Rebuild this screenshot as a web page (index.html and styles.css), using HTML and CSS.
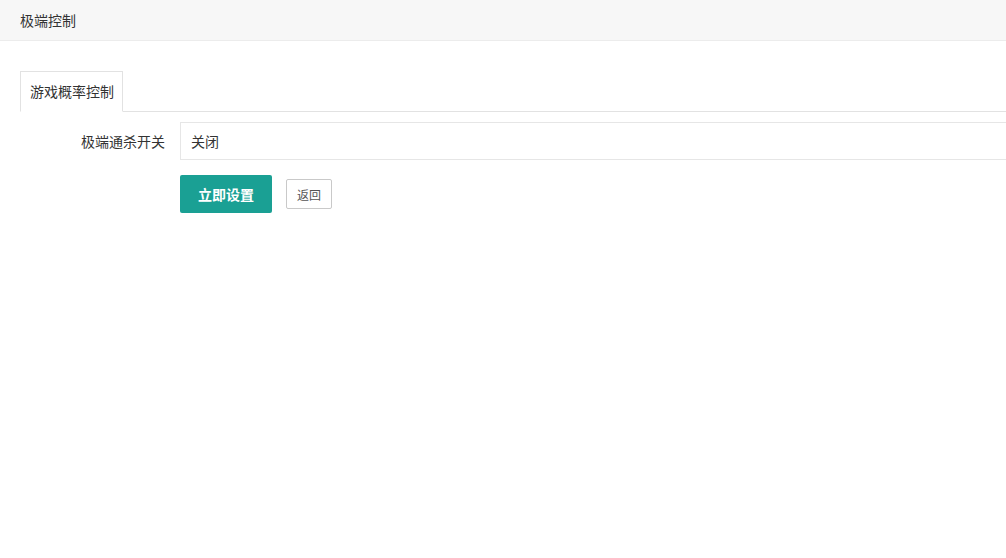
FILE: index.html
```html
<!DOCTYPE html>
<html lang="zh-CN">
<head>
    <meta charset="UTF-8">
    <meta name="viewport" content="width=device-width, initial-scale=1.0">
    <title>极端控制</title>
    <link rel="stylesheet" href="styles.css">
</head>
<body>
    <div class="page-header">极端控制</div>
    <div class="page-body">
        <div class="tab">
            <ul class="tab-title">
                <li class="tab-item active">游戏概率控制</li>
            </ul>
            <form class="tab-content">
                <div class="form-item">
                    <label class="form-label">极端通杀开关</label>
                    <div class="input-block">
                        <input class="input" type="text" value="关闭" readonly>
                    </div>
                </div>
                <div class="form-item">
                    <div class="input-block buttons">
                        <button type="button" class="btn btn-main">立即设置</button>
                        <button type="button" class="btn btn-sm">返回</button>
                    </div>
                </div>
            </form>
        </div>
    </div>
</body>
</html>
```

FILE: styles.css
```css
body {
    margin: 0;
    font-family: "Noto Sans CJK SC", "Liberation Sans", sans-serif;
    font-size: 14px;
    color: #333;
    background-color: #fff;
}
.page-header {
    height: 40px;
    line-height: 40px;
    padding-left: 20px;
    background-color: #f7f7f7;
    border-bottom: 1px solid #ececec;
}
.page-body {
    padding: 30px 0 0 20px;
}
.tab-title {
    display: flex;
    margin: 0;
    padding: 0;
    list-style: none;
    height: 40px;
    border-bottom: 1px solid #e2e2e2;
}
.tab-item {
    padding: 0 10px;
    line-height: 40px;
    height: 40px;
    cursor: pointer;
}
.tab-item.active {
    border: 1px solid #e2e2e2;
    border-bottom-color: #fff;
    background-color: #fff;
    height: 39px;
    line-height: 39px;
    box-sizing: content-box;
    padding: 0 8px 0 9px;
}
.tab-content {
    padding-top: 10px;
}
.form-item {
    display: flex;
    margin-bottom: 15px;
}
.form-label {
    width: 145px;
    padding: 9px 15px 9px 0;
    line-height: 20px;
    text-align: right;
}
.form-item .buttons {
    margin-left: 160px;
}
.input-block {
    flex: 1;
}
.input {
    display: block;
    width: 100%;
    height: 38px;
    box-sizing: border-box;
    padding: 0 10px;
    border: 1px solid #e6e6e6;
    border-right: none;
    font-family: inherit;
    font-size: 14px;
    color: #333;
    outline: none;
}
.buttons {
    display: flex;
    align-items: center;
    gap: 14px;
}
.btn {
    font-family: inherit;
    cursor: pointer;
    border-radius: 2px;
    white-space: nowrap;
}
.btn-main {
    height: 38px;
    padding: 0 18px;
    border: none;
    background-color: #1aa094;
    color: #fff;
    font-size: 14px;
    font-weight: bold;
}
.btn-sm {
    height: 30px;
    padding: 0 10px;
    border: 1px solid #c9c9c9;
    background-color: #fff;
    color: #555;
    font-size: 12px;
}
```
